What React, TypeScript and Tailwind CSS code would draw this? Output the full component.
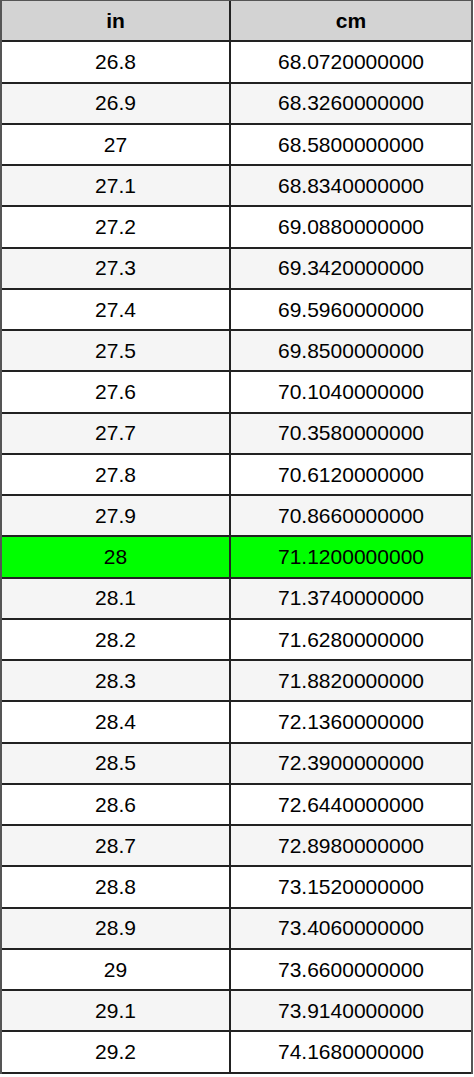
const rows: [string, string][] = [
  ["26.8", "68.0720000000"],
  ["26.9", "68.3260000000"],
  ["27", "68.5800000000"],
  ["27.1", "68.8340000000"],
  ["27.2", "69.0880000000"],
  ["27.3", "69.3420000000"],
  ["27.4", "69.5960000000"],
  ["27.5", "69.8500000000"],
  ["27.6", "70.1040000000"],
  ["27.7", "70.3580000000"],
  ["27.8", "70.6120000000"],
  ["27.9", "70.8660000000"],
  ["28", "71.1200000000"],
  ["28.1", "71.3740000000"],
  ["28.2", "71.6280000000"],
  ["28.3", "71.8820000000"],
  ["28.4", "72.1360000000"],
  ["28.5", "72.3900000000"],
  ["28.6", "72.6440000000"],
  ["28.7", "72.8980000000"],
  ["28.8", "73.1520000000"],
  ["28.9", "73.4060000000"],
  ["29", "73.6600000000"],
  ["29.1", "73.9140000000"],
  ["29.2", "74.1680000000"],
];

export default function App() {
  return (
    <div className="bg-white w-[474px] min-h-[1077px] font-['Liberation_Sans',Arial,sans-serif] text-black">
      <div className="w-[473px] border-t border-l-2 border-r-2 border-[#555]">
        {/* Header */}
        <div className="flex h-[41.25px] border-b-2 border-[#222] bg-[#d3d3d3] font-bold text-[21px]">
          <div className="w-[229px] border-r-2 border-[#222] flex items-center justify-center">in</div>
          <div className="flex-1 flex items-center justify-center">cm</div>
        </div>

        {rows.map(([inch, cm], i) => {
          const hl = inch === "28";
          return (
            <div
              key={inch}
              className={
                "flex h-[41.25px] border-b-2 border-[#222] text-[21px] " +
                (hl ? "bg-[#00ff00]" : i % 2 === 0 ? "bg-white" : "bg-[#f5f5f5]")
              }
            >
              <div className="w-[229px] border-r-2 border-[#222] flex items-center justify-center">{inch}</div>
              <div className="flex-1 flex items-center justify-center">{cm}</div>
            </div>
          );
        })}
      </div>
    </div>
  );
}
